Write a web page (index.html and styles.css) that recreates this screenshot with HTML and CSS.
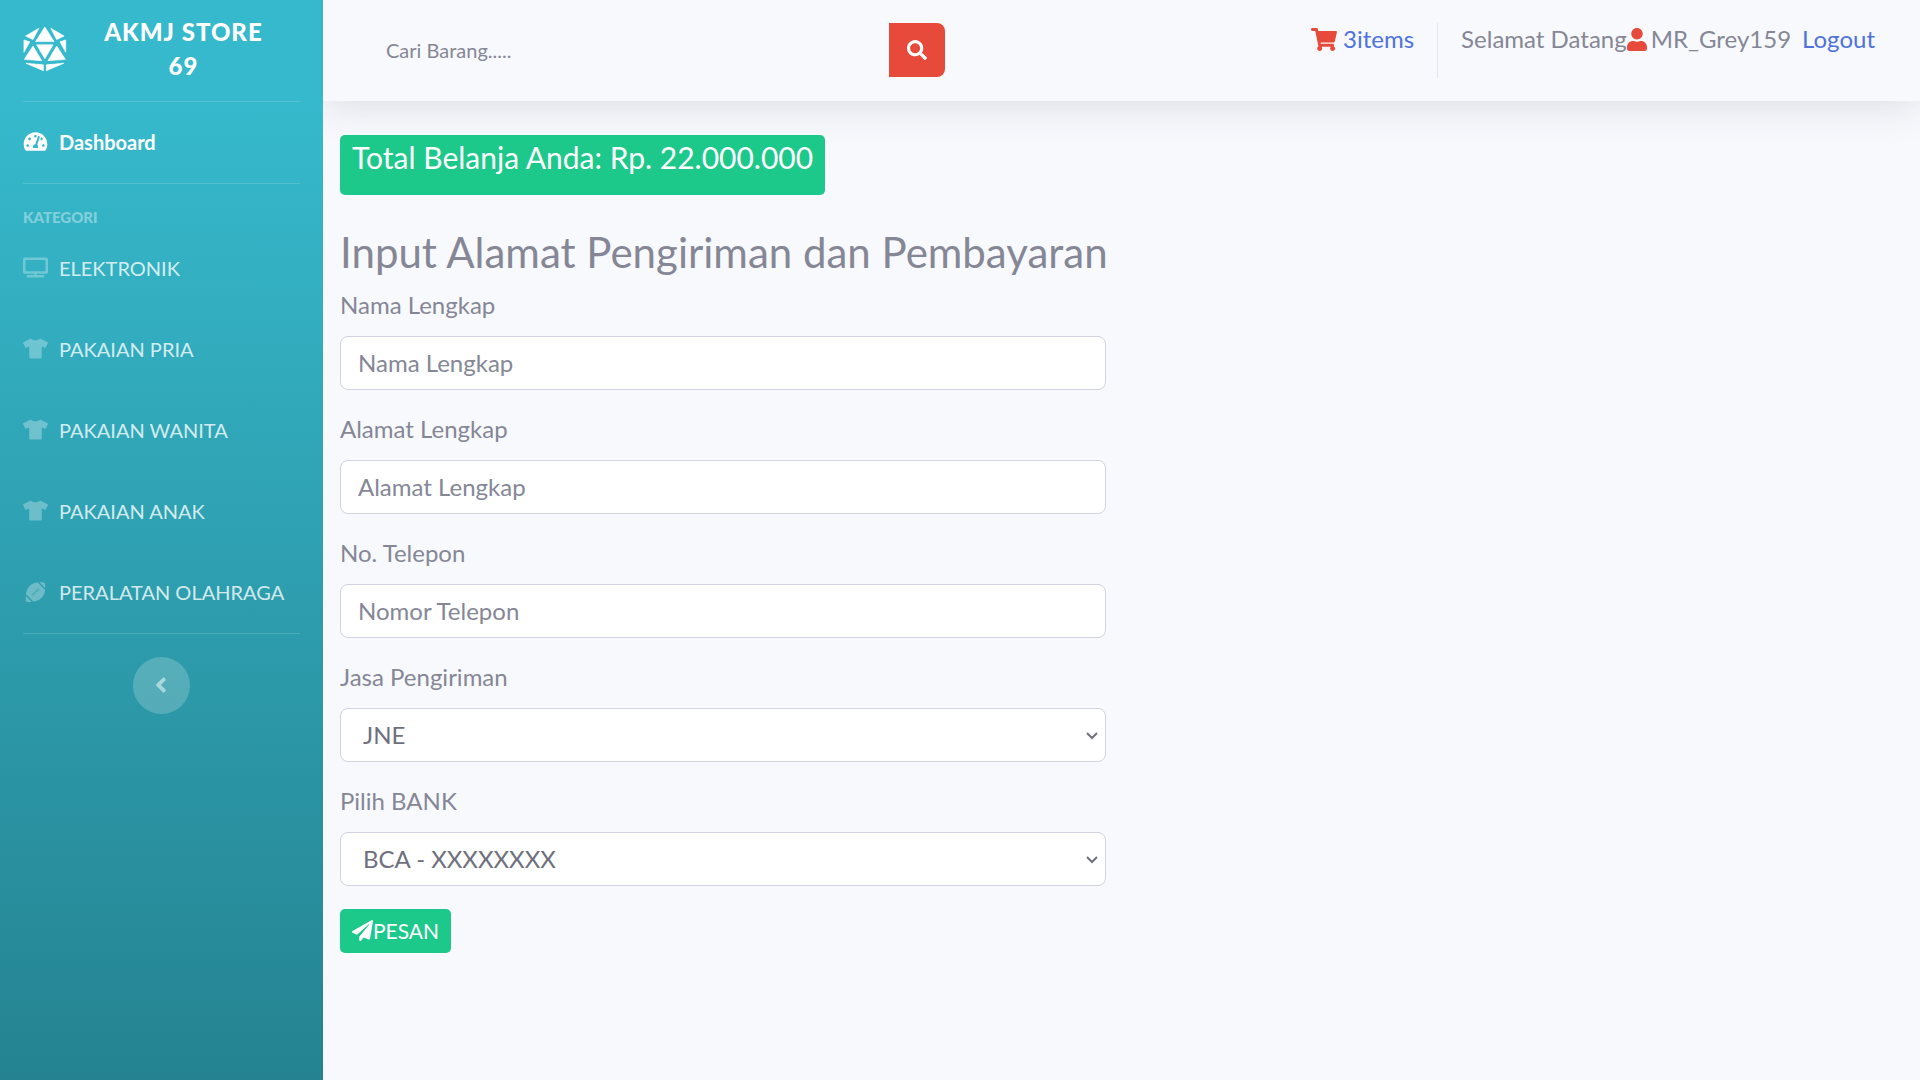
FILE: index.html
```html
<!DOCTYPE html>
<html lang="id">
<head>
<meta charset="utf-8">
<meta name="viewport" content="width=device-width, initial-scale=1">
<title>AKMJ Store 69</title>
<link rel="stylesheet" href="styles.css">
</head>
<body>
<svg class="symbols" aria-hidden="true">
  <symbol id="tshirt" viewBox="0 0 640 512"><path d="M631.2 96.5L436.5 0C416.4 27.8 371.9 47.2 320 47.2S223.6 27.8 203.5 0L8.8 96.5c-7.9 4-11.1 13.6-7.2 21.5l57.2 114.5c4 7.9 13.6 11.1 21.5 7.2l56.6-27.7c10.6-5.2 23 2.5 23 14.4V480c0 17.7 14.3 32 32 32h256c17.7 0 32-14.3 32-32V226.3c0-11.8 12.4-19.6 23-14.4l56.6 27.7c7.9 4 17.5.8 21.5-7.2L638.3 118c4-7.9.8-17.6-7.1-21.5z"/></symbol>
</svg>
<div class="layout">
  <nav class="sidebar">
    <a class="brand" href="#">
      <svg class="brand-icon" viewBox="68 73 134 142" aria-hidden="true">
        <path d="M134.500 76L163 121H106zM116 80L75 104L98 115zM153 80L194 104L171 115zM109 131H160L134.500 174zM70 116L88 122L70 154zM199 116L181 122L199 154zM98 135L125 180L71 176zM171 135L144 180L198 176zM76 188L130 193V211zM193 188L139 193V211z"/>
      </svg>
      <span class="brand-text">AKMJ STORE 69</span>
    </a>
    <hr class="divider">
    <a class="nav-link active" href="#">
      <svg class="nav-icon" viewBox="0 0 576 512" aria-hidden="true"><path d="M288 32C128.940 32 0 160.940 0 320c0 52.800 14.250 102.260 39.060 144.800 5.610 9.620 16.300 15.200 27.440 15.200h443c11.140 0 21.830-5.580 27.440-15.200C561.750 422.260 576 372.800 576 320c0-159.060-128.940-288-288-288zm0 64c14.710 0 26.580 10.130 30.320 23.650-1.110 2.260-2.640 4.230-3.450 6.670l-9.220 27.670c-5.130 3.490-10.970 6.010-17.640 6.010-17.670 0-32-14.330-32-32S270.330 96 288 96zM96 384c-17.670 0-32-14.330-32-32s14.330-32 32-32 32 14.330 32 32-14.330 32-32 32zm48-160c-17.670 0-32-14.330-32-32s14.330-32 32-32 32 14.330 32 32-14.330 32-32 32zm246.770-72.410l-61.330 184C343.130 347.330 352 364.540 352 384c0 11.720-3.380 22.550-8.880 32H232.880c-5.500-9.450-8.880-20.280-8.880-32 0-33.940 26.500-61.430 59.900-63.590l61.340-184.010c4.170-12.560 17.730-19.450 30.360-15.170 12.570 4.190 19.350 17.790 15.170 30.360zm14.660 57.200l15.520-46.550c3.470-1.290 7.130-2.230 11.050-2.230 17.670 0 32 14.330 32 32s-14.330 32-32 32c-11.380-.01-20.890-6.280-26.570-15.220zM480 384c-17.670 0-32-14.330-32-32s14.330-32 32-32 32 14.330 32 32-14.330 32-32 32z"/></svg>
      <span>Dashboard</span>
    </a>
    <hr class="divider">
    <div class="sidebar-heading">KATEGORI</div>
    <a class="nav-link" href="#">
      <svg class="nav-icon wide" viewBox="0 0 640 512" aria-hidden="true"><path d="M592 0H48A48 48 0 0 0 0 48v320a48 48 0 0 0 48 48h240v32H112a16 16 0 0 0-16 16v32a16 16 0 0 0 16 16h416a16 16 0 0 0 16-16v-32a16 16 0 0 0-16-16H352v-32h240a48 48 0 0 0 48-48V48a48 48 0 0 0-48-48zm-16 352H64V64h512z"/></svg>
      <span>ELEKTRONIK</span>
    </a>
    <a class="nav-link" href="#"><svg class="nav-icon wide" aria-hidden="true"><use href="#tshirt"/></svg><span>PAKAIAN PRIA</span></a>
    <a class="nav-link" href="#"><svg class="nav-icon wide" aria-hidden="true"><use href="#tshirt"/></svg><span>PAKAIAN WANITA</span></a>
    <a class="nav-link" href="#"><svg class="nav-icon wide" aria-hidden="true"><use href="#tshirt"/></svg><span>PAKAIAN ANAK</span></a>
    <a class="nav-link" href="#">
      <svg class="nav-icon" viewBox="0 0 60 60" aria-hidden="true">
        <mask id="seams">
          <rect width="60" height="60" fill="#fff"/>
          <path d="M-2 36L26 64M34-4L64 26" stroke="#000" stroke-width="4" fill="none"/>
          <path d="M20 40L40 20M20 34l6 6M25 29l6 6M30 24l6 6M35 20l5 6" stroke="#000" stroke-width="2" fill="none"/>
        </mask>
        <path mask="url(#seams)" d="M1 57C-1 40 1 24 12 12C24 1 40-1 56 2Q59 3 59 6C61 22 59 36 48 48C36 59 20 61 4 59Q1 59 1 57z"/>
      </svg>
      <span>PERALATAN OLAHRAGA</span>
    </a>
    <hr class="divider">
    <button class="toggle" type="button" aria-label="Ciutkan menu">
      <svg viewBox="24 92 212 328" aria-hidden="true"><path d="M31.700 239l136-136c9.400-9.400 24.600-9.400 33.900 0l22.600 22.600c9.400 9.400 9.400 24.600 0 33.900L127.900 256l96.400 96.400c9.400 9.400 9.400 24.600 0 33.900L201.700 409c-9.400 9.400-24.600 9.400-33.900 0l-136-136c-9.500-9.400-9.500-24.600-.1-34z"/></svg>
    </button>
  </nav>

  <div class="content">
    <header class="topbar">
      <form class="search">
        <input class="search-input" type="text" placeholder="Cari Barang....." aria-label="Cari Barang">
        <button class="search-button" type="button" aria-label="Cari">
          <svg viewBox="0 0 512 512" aria-hidden="true"><path d="M505 442.700L405.300 343c-4.500-4.500-10.600-7-17-7H372c27.600-35.300 44-79.700 44-128C416 93.100 322.900 0 208 0S0 93.100 0 208s93.100 208 208 208c48.300 0 92.700-16.400 128-44v16.300c0 6.400 2.500 12.500 7 17l99.700 99.700c9.400 9.400 24.600 9.400 33.900 0l28.300-28.300c9.400-9.400 9.400-24.600.1-34zM208 336c-70.700 0-128-57.200-128-128 0-70.700 57.200-128 128-128 70.700 0 128 57.200 128 128 0 70.700-57.200 128-128 128z"/></svg>
        </button>
      </form>
      <div class="account">
        <a class="cart" href="#">
          <svg class="cart-icon" viewBox="0 0 576 512" aria-hidden="true"><path d="M528.120 301.319l47.273-208C578.806 78.301 567.391 64 551.990 64H159.208l-9.166-44.810C147.758 8.021 137.930 0 126.529 0H24C10.745 0 0 10.745 0 24v16c0 13.255 10.745 24 24 24h69.883l70.248 343.435C147.325 417.100 136 435.222 136 456c0 30.928 25.072 56 56 56s56-25.072 56-56c0-15.674-6.447-29.835-16.824-40h209.647C430.447 426.165 424 440.326 424 456c0 30.928 25.072 56 56 56s56-25.072 56-56c0-22.172-12.888-41.332-31.579-50.405l5.517-24.276c3.413-15.018-8.002-29.319-23.403-29.319H218.117l-6.545-32h293.145c11.206 0 20.920-7.754 23.403-18.681z"/></svg>
          <span>3items</span>
        </a>
        <div class="topbar-divider"></div>
        <div class="user">
          <span>Selamat Datang</span>
          <svg class="user-icon" viewBox="0 0 448 512" aria-hidden="true"><path d="M224 256c70.700 0 128-57.300 128-128S294.700 0 224 0 96 57.300 96 128s57.300 128 128 128zm89.600 32h-16.700c-22.200 10.200-46.900 16-72.900 16s-50.600-5.800-72.900-16h-16.700C60.200 288 0 348.200 0 422.400V464c0 26.500 21.500 48 48 48h352c26.500 0 48-21.500 48-48v-41.600c0-74.200-60.200-134.400-134.400-134.400z"/></svg>
          <span class="user-name">MR_Grey159</span>
        </div>
        <a class="logout" href="#">Logout</a>
      </div>
    </header>

    <main class="main">
      <div class="total">Total Belanja Anda: Rp. 22.000.000</div>
      <h3 class="title">Input Alamat Pengiriman dan Pembayaran</h3>
      <form class="checkout">
        <div class="field">
          <label for="nama">Nama Lengkap</label>
          <input class="control" id="nama" type="text" placeholder="Nama Lengkap">
        </div>
        <div class="field">
          <label for="alamat">Alamat Lengkap</label>
          <input class="control" id="alamat" type="text" placeholder="Alamat Lengkap">
        </div>
        <div class="field">
          <label for="telepon">No. Telepon</label>
          <input class="control" id="telepon" type="text" placeholder="Nomor Telepon">
        </div>
        <div class="field">
          <label for="jasa">Jasa Pengiriman</label>
          <div class="select-wrap">
            <select class="control" id="jasa"><option>JNE</option></select>
            <svg class="chevron" viewBox="0 0 12 8" aria-hidden="true"><path d="M1 1L6 6L11 1"/></svg>
          </div>
        </div>
        <div class="field">
          <label for="bank">Pilih BANK</label>
          <div class="select-wrap">
            <select class="control" id="bank"><option>BCA - XXXXXXXX</option></select>
            <svg class="chevron" viewBox="0 0 12 8" aria-hidden="true"><path d="M1 1L6 6L11 1"/></svg>
          </div>
        </div>
        <button class="submit" type="button">
          <svg viewBox="0 0 512 512" aria-hidden="true"><path d="M476 3.200L12.500 270.600c-18.100 10.400-15.800 35.600 2.200 43.200L121 358.400l287.300-253.200c5.500-4.900 13.300 2.600 8.600 8.300L176 407v80.500c0 23.600 28.500 32.900 42.500 15.800L282 426l124.600 52.200c14.200 6 30.400-2.900 33-18.200l72-432C515 7.800 493.300-6.800 476 3.200z"/></svg>
          <span>PESAN</span>
        </button>
      </form>
    </main>
  </div>
</div>
</body>
</html>
```
FILE: styles.css
```css
*, *::before, *::after { box-sizing: border-box; }

body {
  margin: 0;
  font-family: Lato, "Open Sans", sans-serif;
  font-size: 24px;
  line-height: 32px;
  color: #858796;
  background: #f8f9fd;
}

a { color: #4e73df; text-decoration: none; }
svg { flex: none; fill: currentColor; }
button, input, select { font-family: inherit; }
.symbols { display: none; }

.layout { display: flex; min-height: 100vh; }

/* Sidebar */
.sidebar {
  position: relative;
  z-index: 1;
  flex: 0 0 323px;
  display: flex;
  flex-direction: column;
  background: linear-gradient(180deg, #36b9cc 10%, #258391 100%);
}

.brand {
  display: flex;
  align-items: center;
  height: 101px;
  padding: 0 23px 4px;
  gap: 24px;
  color: #fff;
  font-size: 24px;
  line-height: 34px;
  font-weight: 900;
  letter-spacing: 1px;
  text-align: center;
}
.brand-icon { width: 44px; height: 46px; stroke: #fff; stroke-width: 2; stroke-linejoin: round; }
.brand-text { flex: 1; padding-right: 24px; }

.divider {
  width: auto;
  height: 1px;
  margin: 0 23px;
  border: 0;
  background: rgba(255, 255, 255, .15);
}

.nav-link {
  display: flex;
  align-items: center;
  height: 81px;
  padding: 0 23px 2px;
  gap: 11px;
  font-size: 20px;
  line-height: 30px;
  white-space: nowrap;
  color: rgba(255, 255, 255, .8);
}
.nav-icon { width: 25px; height: 20px; color: rgba(255, 255, 255, .3); }
.nav-icon.wide { height: 21px; }
.nav-link.active { color: #fff; font-weight: 700; }
.nav-link.active .nav-icon { width: 25px; height: 21px; color: #fff; }

.sidebar-heading {
  padding: 23px 23px 0;
  font-size: 15px;
  line-height: 21px;
  font-weight: 900;
  color: rgba(255, 255, 255, .4);
}

.toggle {
  display: flex;
  align-items: center;
  justify-content: center;
  align-self: center;
  width: 57px;
  height: 57px;
  margin-top: 23px;
  padding: 0 2px 2px 0;
  border: 0;
  border-radius: 50%;
  background: rgba(255, 255, 255, .2);
  color: rgba(255, 255, 255, .5);
}
.toggle svg { width: 10px; height: 16px; }

/* Top bar */
.content { flex: 1; min-width: 0; }

.topbar {
  display: flex;
  justify-content: space-between;
  align-items: flex-start;
  height: 101px;
  padding: 23px 45px 0 46px;
  background: #f8f9fd;
  box-shadow: 0 4px 40px rgba(58, 59, 69, .15);
}

.search { display: flex; flex: 0 1 576px; min-width: 0; }
.search-input {
  flex: 1;
  min-width: 0;
  height: 54px;
  padding: 0 17px;
  border: 0;
  background: transparent;
  font-size: 20px;
  color: #6e707e;
}
.search-input::placeholder, .control::placeholder { color: #858796; opacity: 1; }
.search-button {
  display: flex;
  align-items: center;
  justify-content: center;
  width: 56px;
  height: 54px;
  padding: 0;
  border: 0;
  border-radius: 0 8px 8px 0;
  background: #e74a3b;
  color: #fff;
}
.search-button svg { width: 20px; height: 20px; }

.account { display: flex; white-space: nowrap; }
.cart, .user { display: flex; align-items: center; height: 32px; }
.cart { gap: 6px; }
.cart-icon { width: 26px; height: 23px; color: #e74a3b; }
.topbar-divider { width: 1px; height: 55px; margin: 0 23px; background: #e3e6f0; }
.user-icon { width: 20px; height: 23px; color: #e74a3b; }
.user-name { margin-left: 4px; }
.logout { margin-left: 11px; }

/* Checkout */
.main { padding: 34px 17px; }

.total {
  width: fit-content;
  height: 60px;
  padding: 6px 12px;
  border-radius: 5px;
  background: #1cc88a;
  color: #fff;
  font-size: 30px;
}

.title {
  margin: 33px 0 12px;
  font-size: 42px;
  line-height: 49px;
  font-weight: 400;
}

.checkout { max-width: 766px; }
.field { margin-bottom: 23px; }
.field label { display: block; margin-bottom: 15px; }
.control {
  display: block;
  width: 100%;
  height: 54px;
  padding: 0 17px 1px;
  border: 1px solid #d1d3e2;
  border-radius: 8px;
  background: #fff;
  color: #6e707e;
  font-size: 24px;
}
.select-wrap { position: relative; }
select.control { appearance: none; padding: 0 22px 2px; }
.chevron {
  position: absolute;
  right: 8px;
  top: 24px;
  width: 12px;
  height: 8px;
  fill: none;
  stroke: #6e707e;
  stroke-width: 2;
  pointer-events: none;
}

.submit {
  display: flex;
  align-items: center;
  height: 44px;
  padding: 0 12px 2px;
  border: 0;
  border-radius: 5px;
  background: #1cc88a;
  color: #fff;
  font-size: 21px;
}
.submit svg { width: 21px; height: 21px; }
```
